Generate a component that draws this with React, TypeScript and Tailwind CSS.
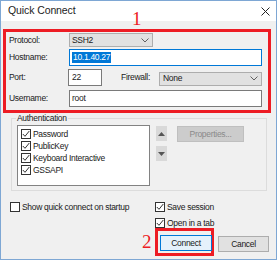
import React from "react";

const Chevron = () => (
  <svg width="8" height="5" viewBox="0 0 8 5" className="shrink-0">
    <path d="M0.5 0.5 L4 4 L7.5 0.5" fill="none" stroke="#606060" strokeWidth="1" />
  </svg>
);

const Check = ({ checked = true }: { checked?: boolean }) => (
  <div className="w-[10px] h-[10px] border border-[#333] bg-white flex items-center justify-center shrink-0">
    {checked && (
      <svg width="8" height="8" viewBox="0 0 8 8">
        <path d="M0.8 4 L3 6.3 L7.3 1" fill="none" stroke="#333" strokeWidth="1" />
      </svg>
    )}
  </div>
);

export default function App() {
  return (
    <div className="w-[280px] h-[263px] bg-white font-['Liberation_Sans',Arial,sans-serif] text-[8.5px] tracking-[-0.3px] text-[#1a1a1a]">
      <div className="relative w-[277px] h-[260px] border border-[#7ea7d4] bg-[#f0f0f0] flex flex-col">
        {/* title bar */}
        <div className="h-[20px] bg-white flex items-center justify-between pl-[7px] pr-[6px] shrink-0">
          <span className="text-[10.5px] tracking-[-0.1px] text-[#222]">Quick Connect</span>
          <svg width="9" height="9" viewBox="0 0 9 9">
            <path d="M0.5 0.5 L8.5 8.5 M8.5 0.5 L0.5 8.5" stroke="#222" strokeWidth="1" />
          </svg>
        </div>
        <span className="absolute left-[131px] top-[8px] text-[19px] leading-none text-[#ed1c24] font-['Liberation_Serif',serif]">1</span>

        {/* red box 1 */}
        <div className="ml-[2px] mt-[8px] w-[268px] border-[3px] border-[#ed1c24] pt-[1px] pb-[3px] pl-[3px] pr-[6px] flex flex-col">
          <div className="flex items-center h-[14px]">
            <span className="w-[60px]">Protocol:</span>
            <div className="w-[84px] h-[14px] bg-[#e1e1e1] border border-[#adadad] flex items-center justify-between pl-[2px] pr-[3px]">
              <span>SSH2</span>
              <Chevron />
            </div>
          </div>
          <div className="flex items-center h-[17px] mt-[2px]">
            <span className="w-[60px]">Hostname:</span>
            <div className="flex-1 h-[17px] bg-white border border-[#0078d7] flex items-center pl-[2px]">
              <span className="bg-[#0078d7] text-white leading-[11px] px-[1px]">10.1.40.27</span>
            </div>
          </div>
          <div className="flex items-center h-[17px] mt-[3px]">
            <span className="w-[59px]">Port:</span>
            <div className="w-[34px] h-[17px] bg-white border border-[#7a7a7a] flex items-center pl-[3px]">22</div>
            <span className="ml-[19px] w-[38px]">Firewall:</span>
            <div className="flex-1 h-[14px] mt-[2px] bg-[#e1e1e1] border border-[#adadad] flex items-center justify-between pl-[3px] pr-[3px]">
              <span>None</span>
              <Chevron />
            </div>
          </div>
          <div className="flex items-center h-[17px] mt-[4px]">
            <span className="w-[60px]">Username:</span>
            <div className="flex-1 h-[17px] bg-white border border-[#7a7a7a] flex items-center pl-[2px]">root</div>
          </div>
        </div>

        {/* authentication groupbox */}
        <div className="relative ml-[10px] mt-[5px] w-[256px] h-[73px] border border-[#dcdcdc] pl-[5px] pt-[6px] flex">
          <span className="absolute left-[4px] -top-[6px] bg-[#f0f0f0] px-[1px] leading-[10px]">Authentication</span>
          <div className="w-[133px] h-[61px] bg-white border border-[#828282] pl-[3px] pt-[2px] flex flex-col">
            {["Password", "PublicKey", "Keyboard Interactive", "GSSAPI"].map((t) => (
              <div key={t} className="flex items-center h-[12px] gap-[2px]">
                <Check />
                <span>{t}</span>
              </div>
            ))}
          </div>
          <div className="ml-[6px] mt-[1px] flex flex-col gap-[5px]">
            <div className="w-[11px] h-[15px] bg-[#d9d9d9] flex items-center justify-center">
              <svg width="7" height="4" viewBox="0 0 7 4"><path d="M0 4 L3.5 0 L7 4 Z" fill="#555" /></svg>
            </div>
            <div className="w-[11px] h-[15px] bg-[#d9d9d9] flex items-center justify-center">
              <svg width="7" height="4" viewBox="0 0 7 4"><path d="M0 0 L7 0 L3.5 4 Z" fill="#555" /></svg>
            </div>
          </div>
          <div className="ml-[10px] mt-[1px] w-[67px] h-[16px] bg-[#cccccc] border border-[#bfbfbf] flex items-center justify-center text-[#8a8a8a]">
            Properties...
          </div>
        </div>

        {/* bottom */}
        <div className="flex mt-[11px]">
          <div className="ml-[9px] w-[145px] flex items-start">
            <div className="flex items-center h-[10px] gap-[2px]">
              <Check checked={false} />
              <span>Show quick connect on startup</span>
            </div>
          </div>
          <div className="flex flex-col">
            <div className="flex items-center h-[10px] gap-[2px]">
              <Check />
              <span>Save session</span>
            </div>
            <div className="flex items-center h-[10px] gap-[2px] mt-[6px]">
              <Check />
              <span>Open in a tab</span>
            </div>
            <div className="flex mt-[0px]">
              <div className="relative border-[3px] border-[#ed1c24] pl-[2px] pt-[4px] pb-[1px] w-[59px] h-[28px]">
                <span className="absolute -left-[16px] top-[1px] text-[19px] leading-none text-[#ed1c24] font-['Liberation_Serif',serif]">2</span>
                <div className="w-[52px] h-[16px] bg-[#e5f1fb] border border-[#0078d7] flex items-center justify-center">
                  Connect
                </div>
              </div>
              <div className="ml-[4px] mt-[8px] w-[51px] h-[16px] bg-[#e1e1e1] border border-[#adadad] flex items-center justify-center">
                Cancel
              </div>
            </div>
          </div>
        </div>
      </div>
    </div>
  );
}
